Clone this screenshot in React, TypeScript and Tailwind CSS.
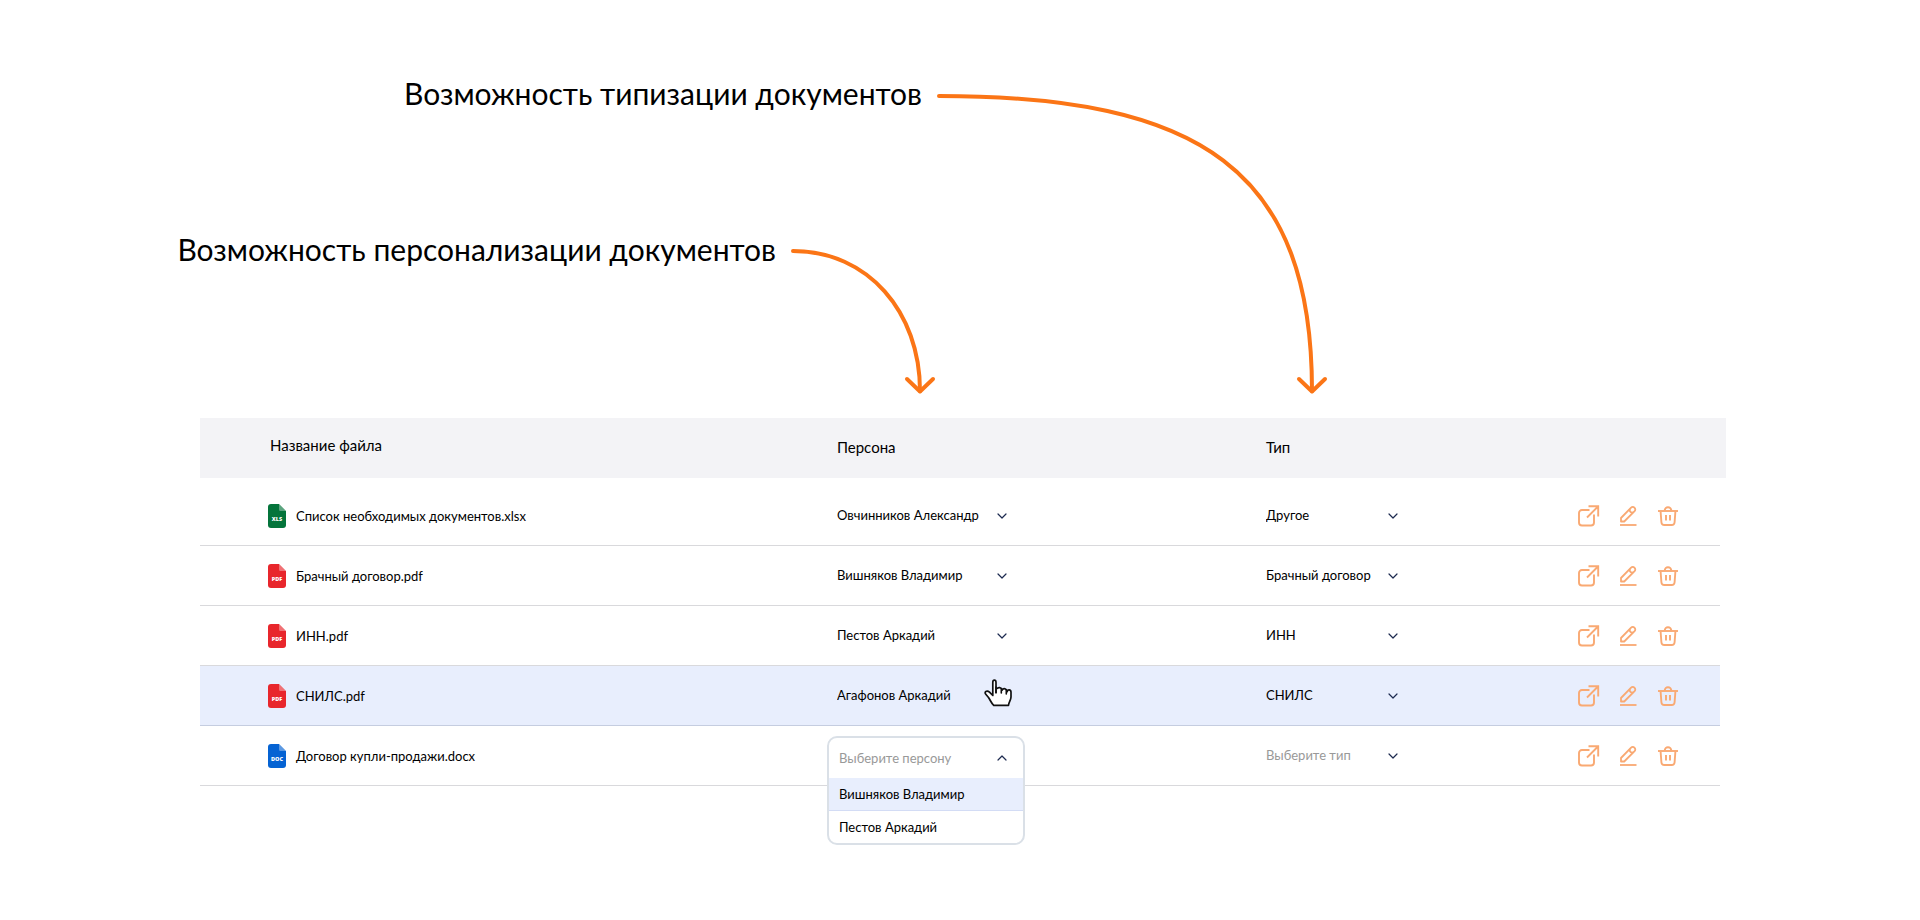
import { useState } from "react";

type FileKind = "XLS" | "PDF" | "DOC";

type DocumentRow = {
  name: string;
  kind: FileKind;
  person: string;
  type: string;
  hovered?: boolean;
};

const rows: DocumentRow[] = [
  { name: "Список необходимых документов.xlsx", kind: "XLS", person: "Овчинников Александр", type: "Другое" },
  { name: "Брачный договор.pdf", kind: "PDF", person: "Вишняков Владимир", type: "Брачный договор" },
  { name: "ИНН.pdf", kind: "PDF", person: "Пестов Аркадий", type: "ИНН" },
  { name: "СНИЛС.pdf", kind: "PDF", person: "Агафонов Аркадий", type: "СНИЛС", hovered: true },
  { name: "Договор купли-продажи.docx", kind: "DOC", person: "", type: "" },
];

const persons = ["Овчинников Александр", "Вишняков Владимир", "Пестов Аркадий", "Агафонов Аркадий"];
const types = ["Другое", "Брачный договор", "ИНН", "СНИЛС"];

const kindColors = { XLS: "#04743b", PDF: "#e8262c", DOC: "#0563d3" };

function FileIcon({ kind }: { kind: FileKind }) {
  return (
    <svg width="18" height="24" viewBox="0 0 18 24" className="shrink-0" aria-hidden="true">
      <path d="M3 0H11L18 7V21a3 3 0 0 1-3 3H3a3 3 0 0 1-3-3V3a3 3 0 0 1 3-3Z" fill={kindColors[kind]} />
      <path d="M11 0L18 7H12.500a1.500 1.500 0 0 1-1.500-1.500Z" fill="#fff" fillOpacity="0.35" />
      <text x="9" y="17.300" textAnchor="middle" fill="#fff" fontSize="5.500" fontWeight="800" fontFamily="Open Sans, sans-serif">
        {kind}
      </text>
    </svg>
  );
}

function Chevron({ up }: { up?: boolean }) {
  return (
    <svg width="10" height="6" viewBox="0 0 10 6" fill="none" stroke="#1d2b50" strokeWidth="1.200" strokeLinecap="round" strokeLinejoin="round" aria-hidden="true">
      <path d={up ? "M1 5L5 1L9 5" : "M1 1L5 5L9 1"} />
    </svg>
  );
}

function OpenIcon() {
  return (
    <svg width="22" height="22" viewBox="0 0 22 22" fill="none" stroke="#f9a973" strokeWidth="1.900" aria-hidden="true">
      <path d="M11.500 5H4a3 3 0 0 0-3 3V17.500a3 3 0 0 0 3 3H13a3 3 0 0 0 3-3V9.500" />
      <path d="M9 12.500L20 1.500M10.500 1.200H20.200V11.500" />
    </svg>
  );
}

function EditIcon() {
  return (
    <svg width="18" height="22" viewBox="0 0 18 22" fill="none" stroke="#f9a973" strokeWidth="1.800" strokeLinejoin="round" aria-hidden="true">
      <path d="M1 16.500V13L11.100 2.600a2.300 2.300 0 0 1 3.300 0l.2.2a2.300 2.300 0 0 1 0 3.300L4.200 16.500Z" />
      <path d="M9.900 4a2.500 2.500 0 0 0 3.300 3.300" />
      <path d="M0 20H16.500" />
    </svg>
  );
}

function TrashIcon() {
  return (
    <svg width="20" height="22" viewBox="0 0 20 22" fill="none" stroke="#f9a973" strokeWidth="1.900" aria-hidden="true">
      <path d="M0 6H20" />
      <path d="M6.700 5.500a3.300 3.300 0 0 1 6.600 0" />
      <path d="M2.600 6.500L3.400 17.200a3 3 0 0 0 3 2.800H13.600a3 3 0 0 0 3-2.800L17.400 6.500" />
      <path d="M8 10V15.500M12 10V15.500" />
    </svg>
  );
}

function HandCursor() {
  return (
    <svg width="29" height="28" viewBox="0 0 29 28" className="absolute left-[146px] top-[13px] pointer-events-none" aria-hidden="true">
      <path
        d="M12 14V3.500C12 .4 8.800.4 8.800 3.500V16.500L5.500 13.200C2.800 10.800-.2 12.900 1.800 15.300L4.500 18.500C6.500 21.500 7.300 24.200 9.700 26.300H24.500C24.500 23.500 27 21 27 18V13.200C27 10.300 23.300 10.300 23.300 12.600C23 9.300 19.200 9 18.300 11C17.500 8.200 13.800 8 13 10"
        transform="translate(1 0)"
        fill="#fff"
        stroke="#111"
        strokeWidth="1.700"
        strokeLinejoin="round"
      />
      <path d="M13 8V14M18.300 10V14M23.300 11V15" fill="none" stroke="#111" strokeWidth="1.600" strokeLinecap="round" />
    </svg>
  );
}

type SelectProps = {
  label: string;
  value: string;
  options: string[];
  placeholder: string;
  hideChevron?: boolean;
};

function CellSelect({ label, value, options, placeholder, hideChevron }: SelectProps) {
  const [current, setCurrent] = useState(value);
  return (
    <div className="grid grid-cols-[1fr_auto] items-center">
      <select
        aria-label={label}
        value={current}
        onChange={(e) => setCurrent(e.target.value)}
        className={`col-span-2 col-start-1 row-start-1 w-full appearance-none bg-transparent pb-0.5 pr-4 outline-none ${current ? "text-black" : "text-[#999999]"}`}
      >
        <option value="" disabled>{placeholder}</option>
        {options.map((o) => (
          <option key={o} value={o}>{o}</option>
        ))}
      </select>
      {!hideChevron && (
        <span className="col-start-2 row-start-1 pointer-events-none">
          <Chevron />
        </span>
      )}
    </div>
  );
}

function PersonDropdown() {
  return (
    <div className="absolute -left-[10px] top-[10px] z-10 w-[198px] overflow-hidden rounded-[10px] border-2 border-[#dae0e7] bg-white">
      <button type="button" aria-expanded="true" className="flex h-10 w-full items-center justify-between pl-2.5 pr-4 text-[#999999]">
        Выберите персону
        <Chevron up />
      </button>
      <ul role="listbox" aria-label="Персона">
        <li role="option" aria-selected="true" className="flex h-[33px] items-center border-b border-[#d3dcf5] bg-[#e8eefd] px-2.5">
          Вишняков Владимир
        </li>
        <li role="option" aria-selected="false" className="flex h-8 items-center px-2.5">
          Пестов Аркадий
        </li>
      </ul>
    </div>
  );
}

export default function App() {
  return (
    <div className="min-h-screen bg-white pb-16 font-['Lato','Open_Sans',sans-serif] text-black">
      <div className="grid h-[418px]">
        <div className="col-start-1 row-start-1 flex items-start justify-end gap-3.5 pr-[592px] pt-[72px]">
          <h2 className="whitespace-nowrap text-[30px] leading-[42px]">Возможность типизации документов</h2>
          <svg width="392" height="326" viewBox="936 72 392 326" fill="none" stroke="#fb7516" strokeWidth="4" strokeLinecap="round" strokeLinejoin="round" className="shrink-0" aria-hidden="true">
            <path d="M939 96C1200 96 1312 170 1312 391" />
            <path d="M1299 379L1312 391.500L1325 379" />
          </svg>
        </div>
        <div className="col-start-1 row-start-1 flex items-start justify-end gap-3.5 pr-[984px] pt-[228px]">
          <h2 className="whitespace-nowrap text-[30px] leading-[42px]">Возможность персонализации документов</h2>
          <svg width="146" height="170" viewBox="790 228 146 170" fill="none" stroke="#fb7516" strokeWidth="4" strokeLinecap="round" strokeLinejoin="round" className="shrink-0" aria-hidden="true">
            <path d="M793 251C868 251 920 312 920 391" />
            <path d="M907 379L920 391.500L933 379" />
          </svg>
        </div>
      </div>

      <div className="pl-[200px] pr-[194px]">
        <table className="w-full table-fixed border-separate border-spacing-0 text-left text-[13px] leading-5">
          <colgroup>
            <col />
            <col className="w-[429px]" />
            <col className="w-[312px]" />
            <col className="w-[142px]" />
            <col className="w-[6px]" />
          </colgroup>
          <thead>
            <tr className="h-[60px] bg-[#f3f3f6] text-[15px]">
              <th className="p-0 pb-1.5 pl-[70px] font-normal">Название файла</th>
              <th className="p-0 pb-0.5 font-normal">Персона</th>
              <th className="p-0 pb-0.5 font-normal">Тип</th>
              <th className="p-0" aria-label="Действия"></th>
              <th className="p-0"></th>
            </tr>
          </thead>
          <tbody>
            <tr className="h-2" aria-hidden="true">
              <td colSpan={5} className="p-0"></td>
            </tr>
            {rows.map((row) => {
              const cell = row.hovered
                ? "h-[60px] border-b border-[#c5cde0] bg-[#e8eefd] p-0"
                : "h-[60px] border-b border-[#d9d9dc] p-0";
              return (
                <tr key={row.name}>
                  <td className={cell}>
                    <div className="flex items-center gap-2.5 pl-[68px]">
                      <FileIcon kind={row.kind} />
                      {row.name}
                    </div>
                  </td>
                  <td className={`${cell} relative`}>
                    {row.person ? (
                      <div className="w-[170px]">
                        <CellSelect label="Персона" value={row.person} options={persons} placeholder="Выберите персону" hideChevron={row.hovered} />
                      </div>
                    ) : (
                      <PersonDropdown />
                    )}
                    {row.hovered && <HandCursor />}
                  </td>
                  <td className={cell}>
                    <div className="w-[132px]">
                      <CellSelect label="Тип" value={row.type} options={types} placeholder="Выберите тип" />
                    </div>
                  </td>
                  <td className={cell}>
                    <div className="flex items-center gap-5">
                      <button type="button" aria-label="Открыть"><OpenIcon /></button>
                      <button type="button" aria-label="Редактировать"><EditIcon /></button>
                      <button type="button" aria-label="Удалить"><TrashIcon /></button>
                    </div>
                  </td>
                </tr>
              );
            })}
          </tbody>
        </table>
      </div>
    </div>
  );
}
